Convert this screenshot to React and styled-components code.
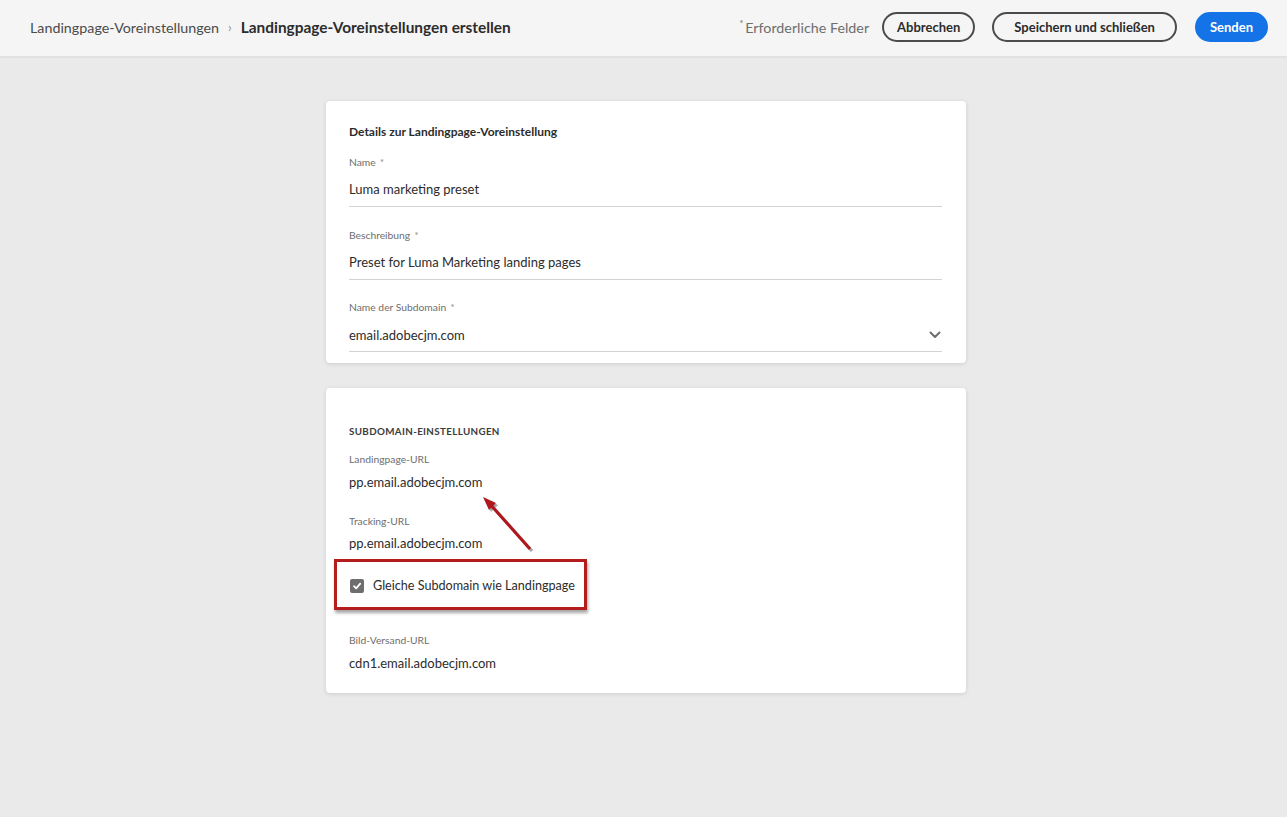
import React from 'react';
import styled, { createGlobalStyle } from 'styled-components';

const GlobalStyle = createGlobalStyle`
  html, body {
    margin: 0;
    padding: 0;
    background: #eaeaea;
    font-family: Lato, "Noto Sans", "Liberation Sans", sans-serif;
    color: #2c2c2c;
  }
`;

const Page = styled.div`
  min-height: 817px;
  background: #eaeaea;
`;

const Header = styled.header`
  height: 54px;
  background: #f5f5f5;
  border-bottom: 2px solid #e1e1e1;
  display: flex;
  align-items: center;
  justify-content: space-between;
  padding: 0 19px 2px 30px;
`;

const Breadcrumbs = styled.nav`
  display: flex;
  align-items: center;
  gap: 9px;
`;

const Crumb = styled.span`
  color: ${p => (p.current ? '#2c2c2c' : '#4b4b4b')};
  font-weight: ${p => (p.current ? 700 : 400)};
  font-size: ${p => (p.current ? 15.4 : 14.3)}px;
`;

const Sep = styled.span`
  color: #8e8e8e;
  font-size: 13px;
  margin-top: -1px;
`;

const Actions = styled.div`
  display: flex;
  align-items: center;
`;

const Required = styled.span`
  font-size: 14.3px;
  color: #6e6e6e;
  margin-right: 13px;

  sup {
    font-size: 9px;
    margin-right: 2px;
  }
`;

const Button = styled.button`
  height: 30px;
  border-radius: 15px;
  padding: 0 ${p => p.pad || 14}px;
  margin-left: ${p => p.gap || 0}px;
  font-family: inherit;
  font-size: 13px;
  font-weight: 700;
  cursor: pointer;
  border: 2px solid ${p => (p.primary ? '#1473e6' : '#4b4b4b')};
  background: ${p => (p.primary ? '#1473e6' : 'transparent')};
  color: ${p => (p.primary ? '#fff' : '#2c2c2c')};
`;

const Main = styled.main`
  display: flex;
  flex-direction: column;
  align-items: center;
  gap: 25px;
  padding: 43px 0 0 5px;
`;

const Card = styled.section`
  position: relative;
  width: 640px;
  box-sizing: border-box;
  background: #fff;
  border-radius: 4px;
  box-shadow: 0 1px 4px rgba(0, 0, 0, 0.13);
  padding: ${p => p.pad || '23px 24px 11px 23px'};
`;

const CardTitle = styled.h2`
  margin: 0 0 16px;
  font-size: 12px;
  line-height: 15px;
  font-weight: 700;
  color: #2c2c2c;
`;

const SectionTitle = styled.h3`
  margin: 0 0 15px;
  font-size: 9.8px;
  line-height: 12px;
  font-weight: 700;
  letter-spacing: 0.35px;
  text-transform: uppercase;
  color: #3c3c3c;
`;

const Field = styled.div`
  margin-bottom: ${p => p.mb || 0}px;
`;

const Label = styled.div`
  font-size: 10.3px;
  color: #6e6e6e;
  line-height: 14px;

  span {
    color: #8e8e8e;
    margin-left: 4px;
  }
`;

const Input = styled.div`
  display: flex;
  align-items: center;
  justify-content: space-between;
  line-height: 20px;
  margin-top: ${p => p.mt || 10}px;
  padding-bottom: ${p => p.pb || 7}px;
  border-bottom: 1px solid #d3d3d3;
  font-size: 13px;
  color: #2c2c2c;
`;

const Value = styled.div`
  font-size: 13px;
  line-height: 20px;
  color: #2c2c2c;
  margin-top: ${p => p.mt || 6}px;
`;

const Highlight = styled.div`
  margin: ${p => p.m};
  width: 253px;
  height: 51px;
  box-sizing: border-box;
  border: 3px solid #b51d1d;
  box-shadow: 1px 3px 3px rgba(0, 0, 0, 0.35);
  display: flex;
  align-items: center;
  padding: 2px 0 0 13px;
  gap: 9px;
`;

const Check = styled.span`
  flex: none;
  width: 14px;
  height: 14px;
  border-radius: 2px;
  background: #6e6e6e;
  display: flex;
  align-items: center;
  justify-content: center;
`;

const CheckText = styled.span`
  font-size: 12.6px;
  white-space: nowrap;
  color: #2c2c2c;
`;

const Arrow = styled.svg`
  position: absolute;
  left: 150px;
  top: 102px;
  overflow: visible;
`;

const Chevron = () => (
  <svg width="12" height="8" viewBox="0 0 12 8" style={{ marginRight: 1 }}>
    <path d="M1.5 1.5 L6 6 L10.5 1.5" fill="none" stroke="#6e6e6e" strokeWidth="2" strokeLinecap="round" strokeLinejoin="round" />
  </svg>
);

const App = () => (
  <Page>
    <GlobalStyle />
    <Header>
      <Breadcrumbs>
        <Crumb>Landingpage-Voreinstellungen</Crumb>
        <Sep>›</Sep>
        <Crumb current>Landingpage-Voreinstellungen erstellen</Crumb>
      </Breadcrumbs>
      <Actions>
        <Required><sup>*</sup>Erforderliche Felder</Required>
        <Button pad={13}>Abbrechen</Button>
        <Button pad={20} gap={17}>Speichern und schließen</Button>
        <Button primary pad={13} gap={18}>Senden</Button>
      </Actions>
    </Header>

    <Main>
      <Card>
        <CardTitle>Details zur Landingpage-Voreinstellung</CardTitle>
        <Field mb={21}>
          <Label>Name<span>*</span></Label>
          <Input>Luma marketing preset</Input>
        </Field>
        <Field mb={20}>
          <Label>Beschreibung<span>*</span></Label>
          <Input>Preset for Luma Marketing landing pages</Input>
        </Field>
        <Field>
          <Label>Name der Subdomain<span>*</span></Label>
          <Input mt={11} pb={6}>email.adobecjm.com<Chevron /></Input>
        </Field>
      </Card>

      <Card pad="37px 24px 20px 23px">
        <SectionTitle>Subdomain-Einstellungen</SectionTitle>
        <Field mb={22}>
          <Label>Landingpage-URL</Label>
          <Value>pp.email.adobecjm.com</Value>
        </Field>
        <Field>
          <Label>Tracking-URL</Label>
          <Value mt={5}>pp.email.adobecjm.com</Value>
        </Field>
        <Highlight m="6px 0 23px -15px">
          <Check>
            <svg width="10" height="10" viewBox="0 0 10 10">
              <path d="M2 5.2 L4.2 7.4 L8.2 2.6" fill="none" stroke="#fff" strokeWidth="1.8" strokeLinecap="round" strokeLinejoin="round" />
            </svg>
          </Check>
          <CheckText>Gleiche Subdomain wie Landingpage</CheckText>
        </Highlight>
        <Field>
          <Label>Bild-Versand-URL</Label>
          <Value>cdn1.email.adobecjm.com</Value>
        </Field>
        <Arrow width="60" height="65" viewBox="0 0 60 65">
          <g transform="translate(2 2)" opacity="0.35">
            <line x1="13" y1="13" x2="54" y2="59" stroke="#000" strokeWidth="3" />
            <polygon points="7,7 20,13 13,20" fill="#000" />
          </g>
          <line x1="13" y1="13" x2="54" y2="59" stroke="#b0171c" strokeWidth="3" />
          <polygon points="7,7 20,13 13,20" fill="#b0171c" />
        </Arrow>
      </Card>
    </Main>
  </Page>
);

export default App;
